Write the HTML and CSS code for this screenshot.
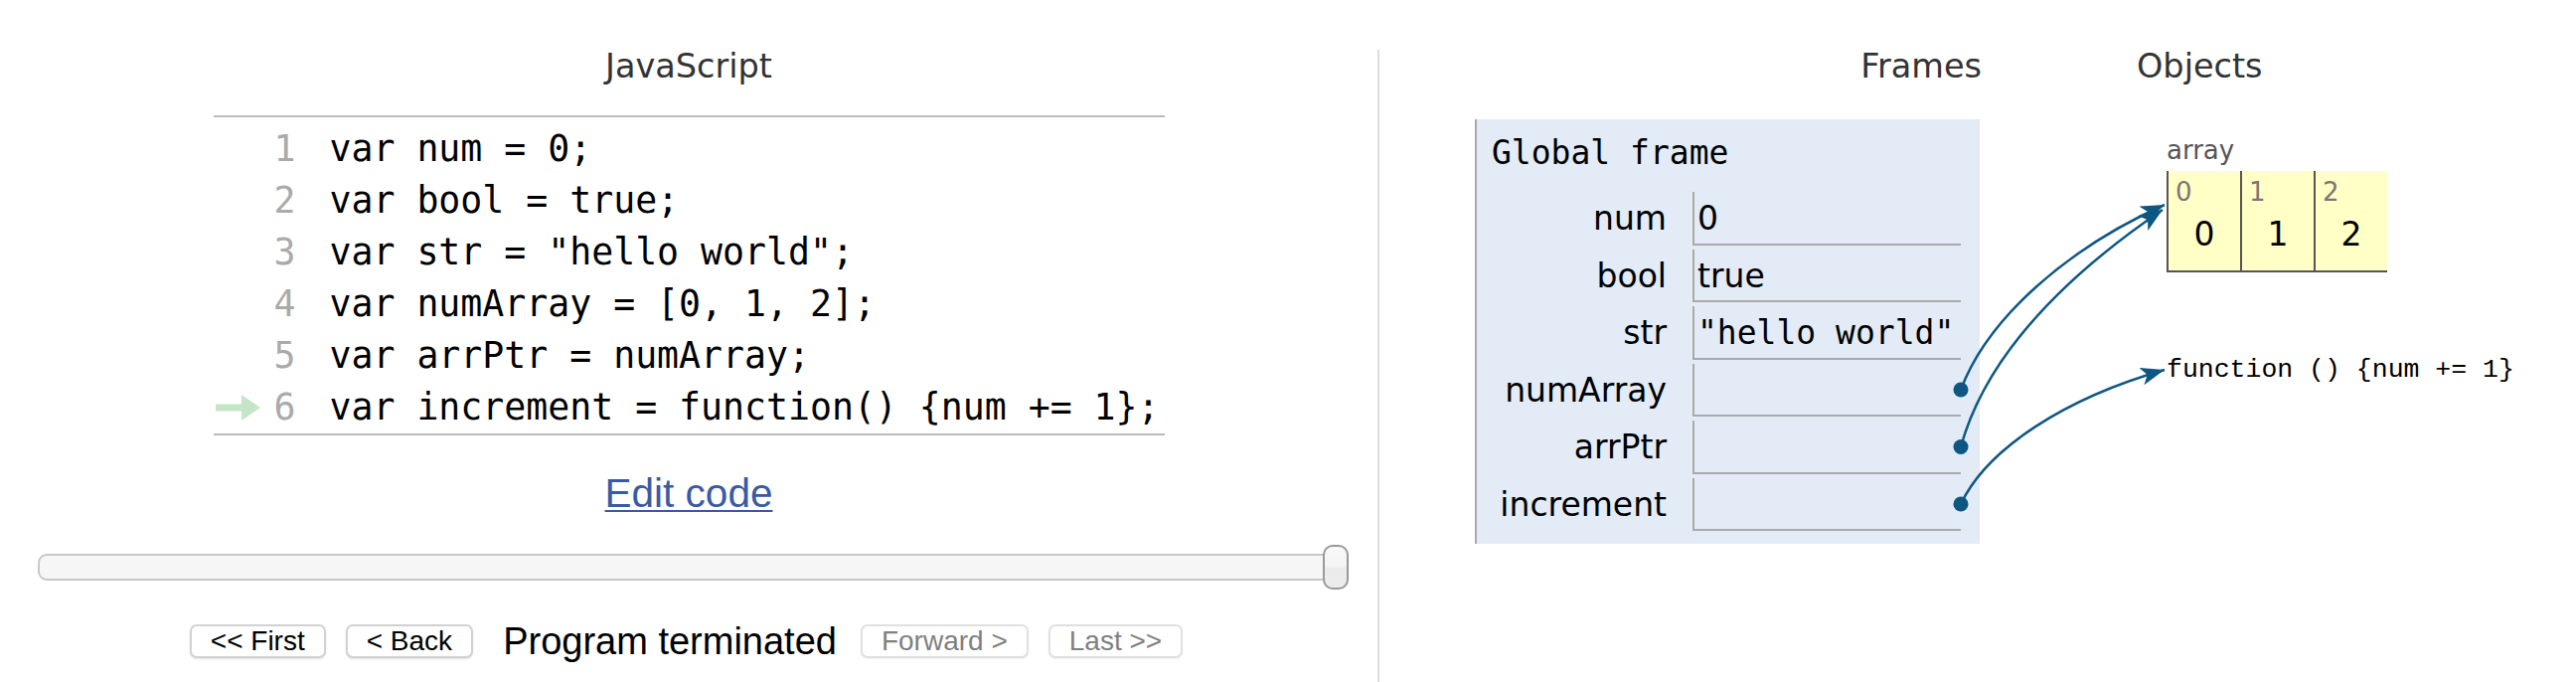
FILE: index.html
```html
<!DOCTYPE html>
<html>
<head>
<meta charset="utf-8">
<title>JavaScript visualization</title>
<link rel="stylesheet" href="styles.css">
</head>
<body>
<div class="page">
  <section class="left">
    <div class="lang">JavaScript</div>
    <div class="code">
      <div class="ln"><span class="arrow"></span><span class="num">1</span><span class="src">var num = 0;</span></div>
      <div class="ln"><span class="arrow"></span><span class="num">2</span><span class="src">var bool = true;</span></div>
      <div class="ln"><span class="arrow"></span><span class="num">3</span><span class="src">var str = "hello world";</span></div>
      <div class="ln"><span class="arrow"></span><span class="num">4</span><span class="src">var numArray = [0, 1, 2];</span></div>
      <div class="ln"><span class="arrow"></span><span class="num">5</span><span class="src">var arrPtr = numArray;</span></div>
      <div class="ln"><span class="arrow"><svg width="45" height="26" viewBox="0 0 45 26"><path d="M0 9.5 H26 V0 L45 13 L26 26 V16.5 H0 Z" fill="#c5e5c7"/></svg></span><span class="num">6</span><span class="src">var increment = function() {num += 1};</span></div>
    </div>
    <div class="edit"><a href="#">Edit code</a></div>
    <div class="slider"><div class="track"></div><div class="handle"></div></div>
    <div class="vcr">
      <button class="btn first">&lt;&lt; First</button>
      <button class="btn back">&lt; Back</button>
      <span class="status">Program terminated</span>
      <button class="btn fwd off">Forward &gt;</button>
      <button class="btn last off">Last &gt;&gt;</button>
    </div>
  </section>
  <section class="right">
    <div class="stack">
      <div class="hdr">Frames</div>
      <div class="frame">
        <div class="fname">Global frame</div>
        <div class="vars">
          <div class="vname">num</div><div class="vval">0</div>
          <div class="vname">bool</div><div class="vval">true</div>
          <div class="vname">str</div><div class="vval mono">"hello world"</div>
          <div class="vname">numArray</div><div class="vval"></div>
          <div class="vname">arrPtr</div><div class="vval"></div>
          <div class="vname">increment</div><div class="vval"></div>
        </div>
      </div>
    </div>
    <div class="heap">
      <div class="hdr">Objects</div>
      <div class="arr">
        <div class="type">array</div>
        <div class="cells">
          <div class="cell"><div class="idx">0</div><div class="val">0</div></div>
          <div class="cell"><div class="idx">1</div><div class="val">1</div></div>
          <div class="cell"><div class="idx">2</div><div class="val">2</div></div>
        </div>
      </div>
      <div class="func">function () {num += 1}</div>
    </div>
  </section>
  <svg class="links" width="2592" height="686" viewBox="0 0 2592 686">
    <defs>
      <marker id="ah" markerWidth="26" markerHeight="20" refX="24" refY="9" orient="auto" markerUnits="userSpaceOnUse">
        <path d="M0,0 L24,9 L0,18 L6,9 Z" fill="#0d5782"/>
      </marker>
    </defs>
    <g fill="none" stroke="#0d5782" stroke-width="2.5">
      <path d="M1973 392 C2000 320, 2080 250, 2178 206" marker-end="url(#ah)"/>
      <path d="M1973 449.5 C1995 370, 2060 290, 2176 211" marker-end="url(#ah)"/>
      <path d="M1973 507 C2000 450, 2080 400, 2178 372" marker-end="url(#ah)"/>
    </g>
    <g fill="#0d5782">
      <circle cx="1973" cy="392" r="7.5"/>
      <circle cx="1973" cy="449.5" r="7.5"/>
      <circle cx="1973" cy="507" r="7.5"/>
    </g>
  </svg>
</div>
</body>
</html>
```

FILE: styles.css
```css
* { box-sizing: border-box; }

body {
  margin: 0;
  background: #fff;
  color: #000;
  font-family: "DejaVu Sans", Verdana, sans-serif;
}

.page {
  position: relative;
  display: flex;
  width: 2592px;
  height: 686px;
  overflow: hidden;
}

/* ---------- left: code ---------- */
.left {
  width: 1388px;
  margin-top: 50px;
  border-right: 2px solid #ddd;
  display: flex;
  flex-direction: column;
  align-items: center;
}

.lang, .hdr {
  font-family: "DejaVu Sans", Verdana, sans-serif;
  font-size: 33.5px;
  line-height: 34px;
  height: 34px;
  color: #333;
}

.code {
  width: 957px;
  margin-top: 32px;
  padding-top: 6px;
  border-top: 2px solid #bbb;
  border-bottom: 2px solid #bbb;
}

.ln {
  display: grid;
  grid-template-columns: 50px 33px 1fr;
  height: 52px;
  line-height: 52px;
  font-family: "DejaVu Sans Mono", monospace;
  font-size: 36.5px;
  white-space: pre;
}

.arrow {
  display: flex;
  align-items: center;
  padding-left: 2px;
}

.num {
  color: #aaa;
  text-align: right;
}

.src {
  padding-left: 34px;
  color: #000;
}

.edit {
  margin-top: 36px;
  font-family: "Liberation Sans", Arial, sans-serif;
  font-size: 40.5px;
  line-height: 45px;
}

.edit a {
  color: #3b5aa5;
  text-decoration: underline;
  text-decoration-thickness: 2px;
  text-underline-offset: 3px;
}

.slider {
  align-self: stretch;
  margin: 29px 29px 0 38px;
  height: 45px;
  display: flex;
  align-items: center;
}

.track {
  flex: 1;
  height: 27px;
  border: 2px solid #c8c8c8;
  border-radius: 9px;
  background: #f6f6f6;
}

.handle {
  width: 26px;
  height: 45px;
  margin-left: -13px;
  border: 2px solid #999;
  border-radius: 10px;
  background: linear-gradient(#f8f8f8 0%, #f4f4f4 45%, #ebebeb 55%, #ededed 100%);
}

.vcr {
  margin-top: 35px;
  margin-right: 5px;
  display: flex;
  align-items: center;
  height: 34px;
}

.btn {
  height: 34px;
  padding: 0 19px;
  border: 2px solid #d2d2d2;
  border-radius: 7px;
  background: #fff;
  color: #000;
  font-family: "Liberation Sans", Arial, sans-serif;
  font-size: 28px;
  line-height: 30px;
  box-shadow: 0 1px 2px rgba(0, 0, 0, 0.12);
}

.btn.off {
  color: #808080;
  border-color: #e0e0e0;
  box-shadow: 0 1px 2px rgba(0, 0, 0, 0.06);
}

.first { margin-right: 20px; }
.back { margin-right: 30px; }
.fwd { margin-right: 20px; }

.status {
  margin-right: 24px;
  font-family: "Liberation Sans", Arial, sans-serif;
  font-size: 38px;
  line-height: 40px;
  color: #000;
}

/* ---------- right: frames & objects ---------- */
.right {
  flex: 1;
  display: flex;
  padding: 50px 0 0 96px;
}

.stack {
  width: 510px;
}

.stack .hdr {
  text-align: right;
}

.frame {
  width: 508px;
  margin-top: 36px;
  padding: 15px 19px 13px 0;
  background: #e2ebf6;
  border-left: 2px solid #aaa;
}

.fname {
  padding-left: 15px;
  font-family: "DejaVu Sans Mono", monospace;
  font-size: 33px;
  line-height: 38px;
  white-space: pre;
}

.vars {
  margin-top: 20px;
  display: grid;
  grid-template-columns: 217px 270px;
  row-gap: 4px;
}

.vname, .vval {
  height: 53.5px;
  padding-top: 3px;
  line-height: 48.5px;
  font-size: 33px;
  white-space: pre;
}

.vname {
  text-align: right;
  padding-right: 26px;
}

.vval {
  padding-left: 3px;
  border-left: 2px solid #aaa;
  border-bottom: 2px solid #aaa;
}

.vval.mono {
  font-family: "DejaVu Sans Mono", monospace;
}

.heap {
  margin-left: 156px;
}

.arr {
  margin-left: 30px;
  margin-top: 52px;
}

.type {
  font-size: 26px;
  line-height: 30px;
  color: #555;
}

.cells {
  margin-top: 6px;
  display: flex;
}

.cell {
  width: 74px;
  height: 102px;
  padding: 8px 0 0 7px;
  background: #ffffc6;
  border-left: 2px solid #555;
  border-bottom: 2px solid #555;
}

.idx {
  height: 26px;
  font-size: 26px;
  line-height: 26px;
  color: #777;
}

.val {
  margin-top: 11.5px;
  margin-left: -7px;
  font-size: 33px;
  line-height: 36px;
  text-align: center;
}

.func {
  margin-left: 30px;
  margin-top: 83px;
  font-family: "Liberation Mono", "Courier New", monospace;
  font-size: 26.5px;
  line-height: 30px;
  white-space: pre;
}

.links {
  position: absolute;
  left: 0;
  top: 0;
  pointer-events: none;
}
```
